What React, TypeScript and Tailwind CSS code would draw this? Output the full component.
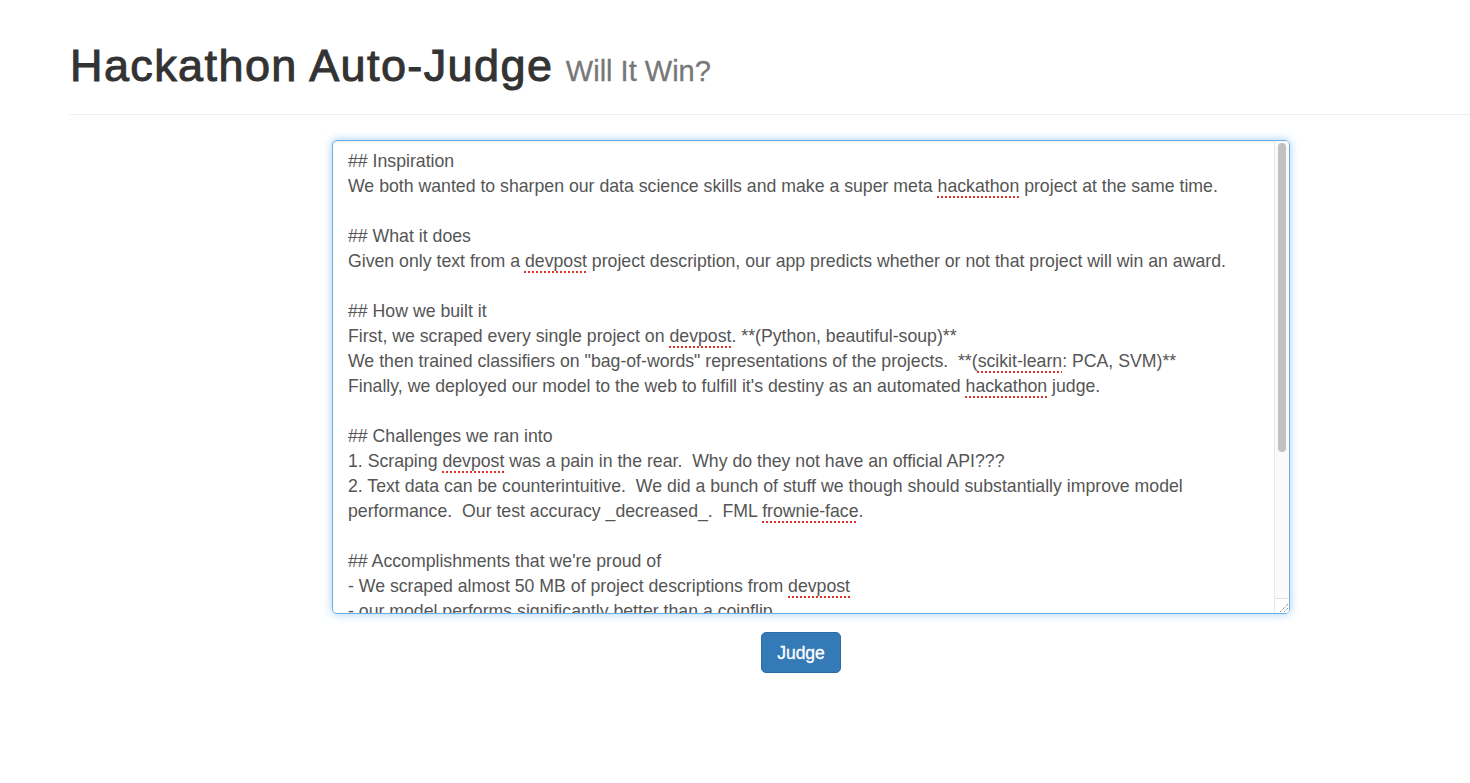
const Spell = ({ children }: { children: string }) => (
  <span className="underline decoration-dotted decoration-[#e0302a] decoration-2 underline-offset-[4px]">{children}</span>
);

const lines: React.ReactNode[] = [
  '## Inspiration',
  <>We both wanted to sharpen our data science skills and make a super meta <Spell>hackathon</Spell> project at the same time.</>,
  '',
  '## What it does',
  <>Given only text from a <Spell>devpost</Spell> project description, our app predicts whether or not that project will win an award.</>,
  '',
  '## How we built it',
  <>First, we scraped every single project on <Spell>devpost</Spell>. **(Python, beautiful-soup)**</>,
  <>We then trained classifiers on "bag-of-words" representations of the projects.  **(<Spell>scikit-learn</Spell>: PCA, SVM)**</>,
  <>Finally, we deployed our model to the web to fulfill it's destiny as an automated <Spell>hackathon</Spell> judge.</>,
  '',
  '## Challenges we ran into',
  <>1. Scraping <Spell>devpost</Spell> was a pain in the rear.  Why do they not have an official API???</>,
  '2. Text data can be counterintuitive.  We did a bunch of stuff we though should substantially improve model',
  <>performance.  Our test accuracy _decreased_.  FML <Spell>frownie-face</Spell>.</>,
  '',
  "## Accomplishments that we're proud of",
  <>- We scraped almost 50 MB of project descriptions from <Spell>devpost</Spell></>,
  '- our model performs significantly better than a coinflip',
];

export default function App() {
  return (
    <div className="min-h-screen bg-white font-['Liberation_Sans',Arial,sans-serif] text-[#333]">
      <div className="ml-[70px] border-b border-[#eee] pt-[41px] pb-[18px]">
        <h1 className="text-[45px] leading-[50px] font-normal">
          <span className="tracking-[1.4px] [-webkit-text-stroke:1px_#333]">Hackathon Auto-Judge</span>{' '}
          <small className="text-[29px] text-[#777] [-webkit-text-stroke:0.3px_#777]">Will It Win?</small>
        </h1>
      </div>

      <div className="relative ml-[332px] mt-[25px] h-[474px] w-[958px] overflow-hidden rounded-[5px] border border-[#66afe9] bg-white shadow-[inset_0_1px_1px_rgba(0,0,0,0.075),0_0_10px_rgba(102,175,233,0.6)]">
        <div className="pl-[15px] pr-[30px] pt-[8px] text-[17.7px] leading-[25px] text-[#555]">
          {lines.map((line, i) => (
            <div key={i} className="h-[25px] whitespace-pre">
              {line}
            </div>
          ))}
        </div>
        <div className="absolute right-0 top-0 flex h-full w-[15px] flex-col border-l border-[#e8e8e8] bg-[#fafafa]">
          <div className="px-[3px] pt-[2px]">
            <div className="h-[309px] rounded-full bg-[#c1c1c1]" />
          </div>
          <div className="mt-auto h-[15px] border-t border-[#e0e0e0] bg-white">
            <svg width="14" height="14" viewBox="0 0 14 14">
              <path d="M13 5 L5 13 M13 9 L9 13" stroke="#666" strokeWidth="1" strokeDasharray="1 1" />
            </svg>
          </div>
        </div>
      </div>

      <button className="ml-[761px] mt-[18px] h-[41px] w-[80px] rounded-[5px] border border-[#2e6da4] bg-[#337ab7] pt-[2px] text-[17.5px] text-white [-webkit-text-stroke:0.3px_#fff]">
        Judge
      </button>
    </div>
  );
}
